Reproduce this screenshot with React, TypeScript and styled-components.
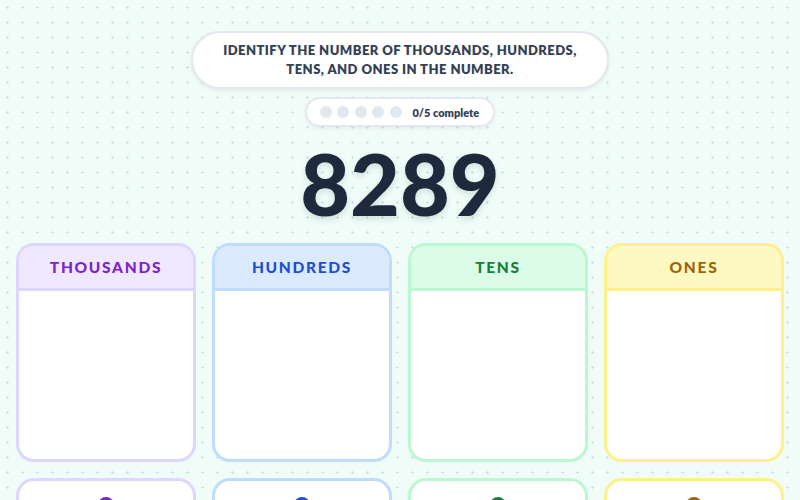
import React from "react";
import styled, { createGlobalStyle } from "styled-components";

const Global = createGlobalStyle`
  html, body { margin: 0; padding: 0; }
  body {
    background-color: #effcf8;
    background-image: radial-gradient(circle, #c9dcd8 0.9px, transparent 1.3px);
    background-size: 15px 15px;
    background-position: 0px 0px;
    font-family: "Lato", "Noto Sans", sans-serif;
    overflow: hidden;
  }
`;

const Page = styled.div`
  width: 800px;
  height: 500px;
  overflow: hidden;
  display: flex;
  flex-direction: column;
  align-items: center;
  padding-top: 31px;
  box-sizing: border-box;
  & > * { flex-shrink: 0; }
`;

const Prompt = styled.div`
  width: 418px;
  box-sizing: border-box;
  background: #ffffff;
  border: 2px solid #e3e8ee;
  border-radius: 999px;
  padding: 8px 20px 8px;
  box-shadow: 0 2px 4px rgba(15, 23, 42, 0.06);
  text-align: center;
  font-size: 13px;
  line-height: 19px;
  font-weight: 800;
  letter-spacing: 0.45px;
  color: #334155;
  text-transform: uppercase;
`;

const Progress = styled.div`
  margin-top: 8px;
  height: 30px;
  box-sizing: border-box;
  display: flex;
  align-items: center;
  gap: 5.5px;
  padding: 0 14px 0 13px;
  background: #ffffff;
  border: 2px solid #e3e8ee;
  border-radius: 999px;
  box-shadow: 0 2px 4px rgba(15, 23, 42, 0.05);
`;

const Dot = styled.span<{ $done?: boolean }>`
  width: 12px;
  height: 12px;
  flex: none;
  border-radius: 50%;
  background: ${(p) => (p.$done ? "#22c55e" : "#e2e8f0")};
`;

const ProgressText = styled.span`
  margin-left: 5px;
  font-size: 11px;
  font-weight: 800;
  color: #334155;
`;

const NumberRow = styled.div`
  height: 116px;
  display: flex;
  align-items: center;
  justify-content: center;
`;

const BigNumber = styled.div`
  font-size: 86px;
  line-height: 1;
  font-weight: 900;
  color: #1e293b;
  letter-spacing: 0px;
  margin-top: -4px;
  text-shadow: 0 3px 6px rgba(15, 23, 42, 0.12);
`;

const Grid = styled.div`
  width: 100%;
  box-sizing: border-box;
  padding: 0 16px;
  display: grid;
  grid-template-columns: repeat(4, 1fr);
  gap: 16px;
`;

type Tone = { border: string; bg: string; text: string };

const tones: Record<string, Tone> = {
  thousands: { border: "#ddd6fe", bg: "#efe8ff", text: "#7e22ce" },
  hundreds: { border: "#bfdbfe", bg: "#dbeafe", text: "#1d4ed8" },
  tens: { border: "#bbf7d0", bg: "#dcfce7", text: "#15803d" },
  ones: { border: "#fef08a", bg: "#fef9c3", text: "#a16207" },
};

const Card = styled.div<{ $tone: Tone }>`
  height: 219px;
  box-sizing: border-box;
  border: 3px solid ${(p) => p.$tone.border};
  border-radius: 18px;
  background: #ffffff;
  overflow: hidden;
  display: flex;
  flex-direction: column;
`;

const CardHeader = styled.div<{ $tone: Tone }>`
  height: 42px;
  flex: none;
  display: flex;
  align-items: center;
  justify-content: center;
  background: ${(p) => p.$tone.bg};
  border-bottom: 3px solid ${(p) => p.$tone.border};
  color: ${(p) => p.$tone.text};
  font-size: 15.5px;
  font-weight: 900;
  letter-spacing: 1.7px;
  text-transform: uppercase;
`;

const CardBody = styled.div`
  flex: 1;
`;

const Tile = styled.div<{ $tone: Tone }>`
  height: 120px;
  box-sizing: border-box;
  border: 3px solid ${(p) => p.$tone.border};
  border-radius: 18px;
  background: #ffffff;
  display: flex;
  justify-content: center;
  padding-top: 16px;
`;

const Bead = styled.span<{ $color: string }>`
  width: 16px;
  height: 16px;
  border-radius: 50%;
  background: ${(p) => p.$color};
`;

const places = [
  { key: "thousands", label: "Thousands" },
  { key: "hundreds", label: "Hundreds" },
  { key: "tens", label: "Tens" },
  { key: "ones", label: "Ones" },
];

export default function App() {
  return (
    <>
      <Global />
      <Page>
        <Prompt>
          Identify the number of thousands, hundreds,
          <br />
          tens, and ones in the number.
        </Prompt>
        <Progress>
          {[0, 1, 2, 3, 4].map((i) => (
            <Dot key={i} />
          ))}
          <ProgressText>0/5 complete</ProgressText>
        </Progress>
        <NumberRow>
          <BigNumber>8289</BigNumber>
        </NumberRow>
        <Grid>
          {places.map((p) => (
            <Card key={p.key} $tone={tones[p.key]}>
              <CardHeader $tone={tones[p.key]}>{p.label}</CardHeader>
              <CardBody />
            </Card>
          ))}
          {places.map((p) => (
            <Tile key={p.key + "-tile"} $tone={tones[p.key]}>
              <Bead $color={tones[p.key].text} />
            </Tile>
          ))}
        </Grid>
      </Page>
    </>
  );
}
